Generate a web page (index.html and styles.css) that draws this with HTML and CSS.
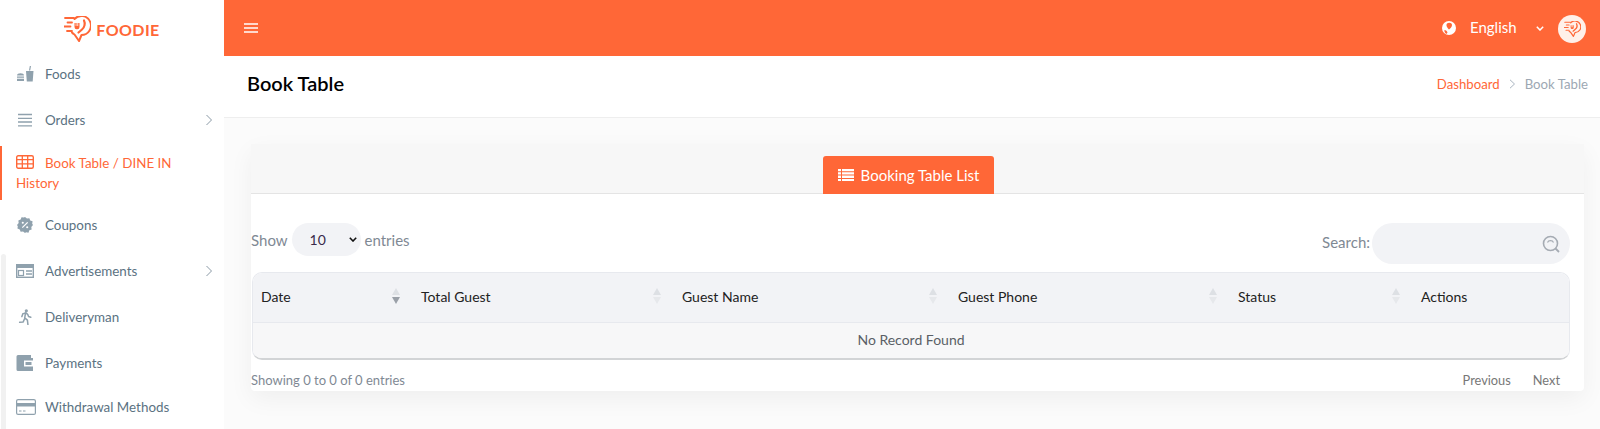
FILE: index.html
```html
<!DOCTYPE html>
<html lang="en">
<head>
  <meta charset="UTF-8">
  <meta name="viewport" content="width=device-width, initial-scale=1.0">
  <title>Book Table</title>
  <link rel="stylesheet" href="styles.css">
</head>
<body>
  <svg class="defs" width="0" height="0">
    <symbol id="logo-mark" viewBox="0 0 27 26">
      <path d="M10.500 3a9.500 9.500 0 1 1 7 16l-2.500 6-4.500-6.500a9.500 9.500 0 0 1-2.500-2" fill="none" stroke="currentColor" stroke-width="2" stroke-linejoin="round" stroke-linecap="round"/>
      <path d="M20 4.500c1.500 3 .5 7-2 9l-3.500 3" fill="none" stroke="currentColor" stroke-width="2.200" stroke-linecap="round"/>
      <path d="M10.500 7v4a2.200 2.200 0 0 0 2.200 2.200h.6a2.200 2.200 0 0 0 2.200-2.200V7h-1.300v3h-.8V7h-1v3h-.7V7z" fill="currentColor"/>
      <path d="M1 2h9M3.500 6.500h4.500M0 10.500h6.500M3 15h5" fill="none" stroke="currentColor" stroke-width="1.800" stroke-linecap="round"/>
    </symbol>
  </svg>

  <div class="app">
    <aside class="sidebar">
      <div class="brand">
        <svg class="brand-mark"><use href="#logo-mark"/></svg>
        <span class="brand-name">FOODIE</span>
      </div>
      <ul class="menu">
        <li class="menu-item">
          <svg class="menu-icon" viewBox="0 0 18 16"><path d="M1 9.500c0-1.300 1.500-2.200 3.500-2.200S8 8.200 8 9.500zM1 10.500h7v1.300H1zM1 12.800h7V15H1zM10 5h7.500l-.8 10.500h-5.900zM13 4.500l.8-4.500h1.200l-.8 4.500z" fill="#8fa1ad"/></svg>
          <span>Foods</span>
        </li>
        <li class="menu-item">
          <svg class="menu-icon" viewBox="0 0 18 14"><path d="M2 1.500h14M2 5.300h14M2 9h14M2 12.800h14" stroke="#8fa1ad" stroke-width="1.300"/></svg>
          <span>Orders</span>
          <svg class="menu-arrow" viewBox="0 0 8 12"><path d="M1.500 1l5 5-5 5" fill="none" stroke="#8b9aa6" stroke-width="1"/></svg>
        </li>
        <li class="menu-item menu-item-active">
          <div class="menu-wrap">
            <svg class="menu-icon" viewBox="0 0 18 14"><rect x=".7" y=".7" width="16.600" height="12.600" rx="1.500" fill="none" stroke="#ff6737" stroke-width="1.400"/><path d="M1 4.700h16M1 8.900h16M6.300 1v12M11.700 1v12" stroke="#ff6737" stroke-width="1.300"/></svg>Book Table / DINE IN History
          </div>
        </li>
        <li class="menu-item">
          <svg class="menu-icon" viewBox="0 0 18 18"><path d="M9 0l2.200 1.700 2.700-.4 1 2.600 2.600 1-.4 2.800L18 9l-1.900 2.300.4 2.700-2.600 1-1 2.600-2.700-.4L9 18l-2.200-1.800-2.700.4-1-2.600-2.600-1 .4-2.700L0 9l1.900-2.300-.4-2.800 2.600-1 1-2.600 2.700.4z" fill="#8fa1ad"/><path d="M6 12l6-6" stroke="#fff" stroke-width="1.400"/><circle cx="6.500" cy="6.500" r="1.200" fill="#fff"/><circle cx="11.500" cy="11.500" r="1.200" fill="#fff"/></svg>
          <span>Coupons</span>
        </li>
        <li class="menu-item">
          <svg class="menu-icon" viewBox="0 0 18 14"><rect x=".7" y=".7" width="16.600" height="12.600" fill="none" stroke="#8fa1ad" stroke-width="1.400"/><path d="M0 1h18v3H0z" fill="#8fa1ad"/><rect x="2.500" y="6.500" width="5" height="5" fill="none" stroke="#8fa1ad" stroke-width="1.200"/><path d="M10 7h6M10 10h6" stroke="#8fa1ad" stroke-width="1.300"/></svg>
          <span>Advertisements</span>
          <svg class="menu-arrow" viewBox="0 0 8 12"><path d="M1.500 1l5 5-5 5" fill="none" stroke="#8b9aa6" stroke-width="1"/></svg>
        </li>
        <li class="menu-item">
          <svg class="menu-icon" viewBox="0 0 18 18"><circle cx="10.500" cy="2" r="1.800" fill="#8fa1ad"/><path d="M6.500 5.500l3.500-1.200 2 1.700 1 2.500 2.500.8M9.500 5l-.8 5 3 2.500.6 5M8.500 11l-1.500 3.500-4 .5M6.500 5.500L5.500 8.500" fill="none" stroke="#8fa1ad" stroke-width="1.700" stroke-linecap="round" stroke-linejoin="round"/></svg>
          <span>Deliveryman</span>
        </li>
        <li class="menu-item">
          <svg class="menu-icon" viewBox="0 0 18 16"><path d="M2 0h13v3H17v13H2a1.500 1.500 0 0 1-1.500-1.500V1.500A1.500 1.500 0 0 1 2 0z" fill="#8fa1ad"/><rect x="8" y="5.500" width="9" height="6" fill="#fff"/><rect x="9.500" y="7" width="6" height="3" fill="#8fa1ad"/></svg>
          <span>Payments</span>
        </li>
        <li class="menu-item menu-item-last">
          <svg class="menu-icon menu-icon-wide" viewBox="0 0 20 16"><rect x=".6" y=".6" width="18.800" height="14.800" rx="1.500" fill="none" stroke="#8fa1ad" stroke-width="1.200"/><path d="M0 4h20v3.500H0z" fill="#8fa1ad"/><path d="M3 12h2.500M7 12h2.500" stroke="#8fa1ad" stroke-width="1"/></svg>
          <span>Withdrawal Methods</span>
        </li>
      </ul>
      <div class="sidebar-track"></div>
    </aside>

    <div class="main">
      <header class="topbar">
        <svg class="burger" viewBox="0 0 14 10"><path d="M0 1h14M0 5h14M0 9h14" stroke="#fff" stroke-width="1.500"/></svg>
        <div class="topbar-right">
          <svg class="globe" viewBox="0 0 14 14"><circle cx="7" cy="7" r="7" fill="#fff"/><path d="M5 2.500c2-1.500 5-.5 5 1.500 0 2-2 3.500-3 4.500C5.500 7 3.500 4.500 5 2.500zM2.500 9c1.500 0 2.500 1 3 2.500L4.500 13C3 12 2 10.500 2.500 9z" fill="#ff6737"/></svg>
          <span class="lang">English</span>
          <svg class="lang-arrow" viewBox="0 0 8 5"><path d="M.8.8L4 4l3.200-3.200" fill="none" stroke="#fff" stroke-width="1.500"/></svg>
          <div class="avatar"><svg class="avatar-mark"><use href="#logo-mark"/></svg></div>
        </div>
      </header>

      <div class="page-head">
        <h1 class="page-title">Book Table</h1>
        <div class="crumbs">
          <a class="crumb-link">Dashboard</a>
          <svg class="crumb-sep" viewBox="0 0 7 10"><path d="M1 .8L5.500 5 1 9.200" fill="none" stroke="#aab5c0" stroke-width="1"/></svg>
          <span class="crumb-current">Book Table</span>
        </div>
      </div>

      <div class="content">
        <section class="card">
          <div class="card-tabs">
            <div class="tab">
              <svg class="tab-icon" viewBox="0 0 16 12"><path d="M0 0h3v2.200H0zM4 0h12v2.200H4zM0 3.200h3v2.400H0zM4 3.200h12v2.400H4zM0 6.600h3v2.400H0zM4 6.600h12v2.400H4zM0 10h3v2H0zM4 10h12v2H4z" fill="#fff"/></svg>
              Booking Table List
            </div>
          </div>

          <div class="card-body">
            <div class="tools">
              <label class="length">Show
                <span class="length-box">10
                  <svg class="length-arrow" viewBox="0 0 8 5"><path d="M.8.800L4 4l3.200-3.200" fill="none" stroke="#111" stroke-width="1.600"/></svg>
                </span>
                entries</label>
              <label class="search"><span class="search-label">Search:</span>
                <span class="search-box">
                  <svg class="search-icon" viewBox="0 0 18 18"><circle cx="8.500" cy="8.500" r="7" fill="none" stroke="#a5abb3" stroke-width="1.600"/><path d="M13.500 13.500L17 17" stroke="#a5abb3" stroke-width="1.800"/><path d="M5.500 7.500c.5-1.200 1.500-1.800 3-1.800s2.500.6 3 1.800" fill="none" stroke="#a5abb3" stroke-width="1.200"/></svg>
                </span>
              </label>
            </div>

            <div class="table-wrap">
              <table class="table">
                <thead>
                  <tr>
                    <th class="col-date"><div class="th-in">Date<svg class="sort" viewBox="0 0 8 16"><path d="M4 0l4 7H0z" fill="#dde0e4"/><path d="M4 16L0 9h8z" fill="#9aa0a8"/></svg></div></th>
                    <th class="col-total"><div class="th-in">Total Guest<svg class="sort" viewBox="0 0 8 16"><path d="M4 0l4 7H0z" fill="#dde0e4"/><path d="M4 16L0 9h8z" fill="#e6e8eb"/></svg></div></th>
                    <th class="col-name"><div class="th-in">Guest Name<svg class="sort" viewBox="0 0 8 16"><path d="M4 0l4 7H0z" fill="#dde0e4"/><path d="M4 16L0 9h8z" fill="#e6e8eb"/></svg></div></th>
                    <th class="col-phone"><div class="th-in">Guest Phone<svg class="sort" viewBox="0 0 8 16"><path d="M4 0l4 7H0z" fill="#dde0e4"/><path d="M4 16L0 9h8z" fill="#e6e8eb"/></svg></div></th>
                    <th class="col-status"><div class="th-in">Status<svg class="sort" viewBox="0 0 8 16"><path d="M4 0l4 7H0z" fill="#dde0e4"/><path d="M4 16L0 9h8z" fill="#e6e8eb"/></svg></div></th>
                    <th class="col-actions"><div class="th-in">Actions</div></th>
                  </tr>
                </thead>
                <tbody>
                  <tr><td colspan="6">No Record Found</td></tr>
                </tbody>
              </table>
            </div>

            <div class="card-foot">
              <span class="info">Showing 0 to 0 of 0 entries</span>
              <div class="pager">
                <a>Previous</a>
                <a>Next</a>
              </div>
            </div>
          </div>
        </section>
      </div>
    </div>
  </div>
</body>
</html>
```

FILE: styles.css
```css
* {
  box-sizing: border-box;
}

html, body {
  margin: 0;
  height: 429px;
  overflow: hidden;
}

body {
  font-family: Lato, "Noto Sans", Arial, sans-serif;
  font-size: 14px;
  color: #222;
  background: #fff;
}

.defs {
  position: absolute;
}

.app {
  display: flex;
  height: 429px;
}

/* Sidebar */
.sidebar {
  position: relative;
  width: 224px;
  flex-shrink: 0;
  height: 429px;
  overflow: hidden;
  background: #fff;
}

.sidebar-track {
  position: absolute;
  left: 1px;
  top: 254px;
  width: 5px;
  height: 175px;
  border-radius: 3px 3px 0 0;
  background: #f1f1f1;
}

.brand {
  height: 51px;
  display: flex;
  align-items: center;
  justify-content: center;
  gap: 5px;
  padding-top: 7px;
  color: #ff6737;
}

.brand-mark {
  width: 27px;
  height: 26px;
}

.brand-name {
  font-size: 16px;
  font-weight: 700;
  letter-spacing: .4px;
}

.menu {
  list-style: none;
  margin: 0;
  padding: 0;
}

.menu-item {
  height: 46px;
  padding: 0 11px 0 16px;
  display: flex;
  align-items: center;
  color: #5b7282;
  font-size: 13.4px;
}

.menu-icon {
  width: 18px;
  height: 16px;
  margin-right: 11px;
  flex-shrink: 0;
}

.menu-icon-wide {
  width: 20px;
  margin-right: 9px;
}

.menu-arrow {
  width: 8px;
  height: 12px;
  margin-left: auto;
}

.menu-item-active {
  height: 54px;
  margin: 3px 0 2px;
  color: #ff6737;
  border-left: 2px solid #ff6737;
  padding-left: 14px;
}

.menu-item-last {
  height: 42px;
}

.menu-wrap {
  line-height: 20px;
  width: 180px;
}

.menu-wrap .menu-icon {
  vertical-align: -2px;
}

/* Topbar */
.main {
  flex: 1;
  min-width: 0;
  display: flex;
  flex-direction: column;
  background: #fbfbfb;
}

.topbar {
  height: 56px;
  flex-shrink: 0;
  background: #ff6737;
  display: flex;
  align-items: center;
  justify-content: space-between;
  padding: 0 14px 0 20px;
  color: #fff;
}

.burger {
  width: 14px;
  height: 10px;
}

.topbar-right {
  display: flex;
  align-items: center;
}

.globe {
  width: 14px;
  height: 14px;
  margin-right: 14px;
}

.lang {
  font-size: 15px;
  width: 66px;
  padding-bottom: 3px;
}

.lang-arrow {
  width: 8px;
  height: 5px;
  margin-right: 14px;
}

.avatar {
  width: 28px;
  height: 28px;
  margin-top: 2px;
  border-radius: 50%;
  background: #fff0e9;
  color: #ff6737;
  display: flex;
  align-items: center;
  justify-content: center;
}

.avatar-mark {
  width: 17px;
  height: 16px;
}

/* Page head */
.page-head {
  height: 62px;
  flex-shrink: 0;
  background: #fff;
  border-bottom: 1px solid #eeeeee;
  display: flex;
  align-items: center;
  justify-content: space-between;
  padding: 0 12px 8px 23px;
}

.page-title {
  margin: 0;
  font-size: 20px;
  font-weight: 600;
  color: #000;
}

.crumbs {
  display: flex;
  align-items: center;
  gap: 9px;
  font-size: 13.2px;
  padding-top: 2px;
}

.crumb-link {
  color: #ff6737;
}

.crumb-sep {
  width: 7px;
  height: 10px;
}

.crumb-current {
  color: #9da8b3;
}

/* Card */
.content {
  padding: 26px 16px 0 27px;
}

.card {
  background: #fff;
  border-radius: 4px;
  box-shadow: 0 8px 24px rgba(0, 0, 0, .05);
}

.card-tabs {
  height: 50px;
  display: flex;
  justify-content: center;
  align-items: flex-end;
  background: #f7f7f7;
  border-bottom: 1px solid #e4e4e4;
  padding-right: 18px;
}

.tab {
  width: 171px;
  height: 38px;
  margin-bottom: -1px;
  background: #ff6737;
  color: #fff;
  font-size: 15px;
  border-radius: 3px 3px 0 0;
  display: flex;
  align-items: center;
  justify-content: center;
  gap: 7px;
}

.tab-icon {
  width: 16px;
  height: 12px;
}

.card-body {
  padding: 0 14px 0 0;
}

.tools {
  height: 78px;
  padding-top: 29px;
  display: flex;
  justify-content: space-between;
  align-items: flex-start;
  color: #7f8994;
  font-size: 15px;
}

.length {
  display: flex;
  align-items: center;
  gap: 4px;
  height: 33px;
}

.length-box {
  width: 69px;
  height: 33px;
  border-radius: 17px;
  background: #f2f3f6;
  color: #3a2a4a;
  font-size: 14px;
  display: flex;
  align-items: center;
  justify-content: space-between;
  padding: 0 4px 0 18px;
}

.length-arrow {
  width: 8px;
  height: 5px;
}

.search {
  display: flex;
  align-items: center;
  gap: 2px;
  height: 41px;
}

.search-label {
  padding-bottom: 4px;
}

.search-box {
  width: 198px;
  height: 41px;
  border-radius: 21px;
  background: #f2f3f6;
  display: flex;
  align-items: center;
  justify-content: flex-end;
  padding-right: 10px;
}

.search-icon {
  width: 18px;
  height: 18px;
}

/* Table */
.table-wrap {
  margin-left: 1px;
  border: 1px solid #e7e9ee;
  border-bottom: 2px solid #d2d4d6;
  border-radius: 10px;
  overflow: hidden;
}

.table {
  width: 100%;
  border-collapse: collapse;
  table-layout: fixed;
}

.table th {
  height: 49px;
  padding: 0 13px 2px 8px;
  background: #f2f3f6;
  border-bottom: 1px solid #e7e9ee;
  font-weight: 400;
  font-size: 14px;
  text-align: left;
  color: #222;
}

.th-in {
  display: flex;
  align-items: center;
  justify-content: space-between;
}

.sort {
  width: 8px;
  height: 16px;
}

.col-date { width: 160px; }
.col-total { width: 261px; }
.col-name { width: 276px; }
.col-phone { width: 280px; }
.col-status { width: 183px; }

.table td {
  height: 36px;
  padding-bottom: 3px;
  background: #f7f7f8;
  text-align: center;
  color: #5a5f66;
  font-size: 14px;
}

.card-foot {
  height: 31px;
  padding-top: 9px;
  display: flex;
  justify-content: space-between;
  align-items: center;
  color: #7f8994;
  font-size: 13px;
}

.pager {
  display: flex;
  gap: 22px;
  padding-right: 10px;
  font-size: 12.800px;
  color: #777;
}
```
